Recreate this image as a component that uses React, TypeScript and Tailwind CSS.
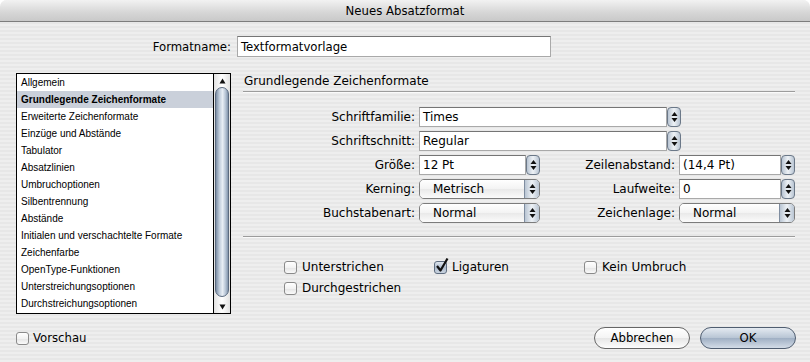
import React from "react";

const items = [
  "Allgemein",
  "Grundlegende Zeichenformate",
  "Erweiterte Zeichenformate",
  "Einzüge und Abstände",
  "Tabulator",
  "Absatzlinien",
  "Umbruchoptionen",
  "Silbentrennung",
  "Abstände",
  "Initialen und verschachtelte Formate",
  "Zeichenfarbe",
  "OpenType-Funktionen",
  "Unterstreichungsoptionen",
  "Durchstreichungsoptionen",
];

function Arrows() {
  return (
    <svg width="7" height="12" viewBox="0 0 7 12">
      <path d="M3.5 1 L6.5 5 L0.5 5 Z" fill="#111" />
      <path d="M3.5 11 L6.5 7 L0.5 7 Z" fill="#111" />
    </svg>
  );
}

function Stepper() {
  return (
    <div className="w-[14px] h-[20px] shrink-0 rounded-[4px] border border-[#6b7888] bg-[linear-gradient(to_right,#b9c5d3,#eef2f6_50%,#b9c5d3)] flex items-center justify-center">
      <Arrows />
    </div>
  );
}

function Combo({ value, width }: { value: string; width: string }) {
  return (
    <div className="flex items-center">
      <div
        className={`${width} h-[20px] bg-white border border-[#a9a9a9] border-t-[#757575] pl-[3px] text-[12px] leading-[18px] text-black`}
      >
        {value}
      </div>
      <Stepper />
    </div>
  );
}

function Popup({ value, width }: { value: string; width: string }) {
  return (
    <div
      className={`${width} h-[20px] flex rounded-[5px] border border-[#7c7c7c] overflow-hidden`}
    >
      <div className="flex-1 bg-[linear-gradient(to_bottom,#ffffff,#f3f3f3_50%,#e9e9e9_51%,#fbfbfb)] pl-[13px] text-[12px] leading-[18px] text-black">
        {value}
      </div>
      <div className="w-[15px] border-l border-[#7f8da0] bg-[linear-gradient(to_right,#b9c5d3,#eef2f6_50%,#b9c5d3)] flex items-center justify-center">
        <Arrows />
      </div>
    </div>
  );
}

function Check({ checked = false }: { checked?: boolean }) {
  return (
    <div className="relative w-[13px] h-[13px] shrink-0">
      <div
        className={
          checked
            ? "w-[13px] h-[13px] rounded-[3px] border border-[#5f6d80] bg-[linear-gradient(to_bottom,#dfe6ee,#aebcce_50%,#c9d3df)]"
            : "w-[13px] h-[13px] rounded-[3px] border border-[#8a8a8a] bg-[linear-gradient(to_bottom,#ffffff,#f2f2f2_50%,#e4e4e4_51%,#fafafa)]"
        }
      />
      {checked && (
        <svg
          className="absolute left-[1px] top-[-4px]"
          width="14"
          height="16"
          viewBox="0 0 14 16"
        >
          <path
            d="M2 9 L5.5 13.5 L12.5 1.5"
            stroke="#111"
            strokeWidth="2.2"
            fill="none"
            strokeLinejoin="round"
          />
        </svg>
      )}
    </div>
  );
}

function Field({ label, children, width }: { label: string; children: React.ReactNode; width: string }) {
  return (
    <>
      <div className={`${width} shrink-0 text-right text-[12px] text-black`}>{label}</div>
      <div className="ml-[4px]">{children}</div>
    </>
  );
}

export default function App() {
  return (
    <div className="w-[810px] h-[362px] bg-white font-['DejaVu_Sans',sans-serif] text-black overflow-hidden">
      <div className="w-[810px] h-[362px] rounded-t-[7px] overflow-hidden bg-[image:repeating-linear-gradient(180deg,#eeeeee_0px,#eeeeee_2px,#e7e7e7_2px,#e7e7e7_4px)]">
        <div className="h-[22px] border-b border-[#7d7d7d] bg-[linear-gradient(to_bottom,#f2f2f2,#d6d6d6_60%,#c9c9c9)] flex items-center justify-center font-['DejaVu_Sans_Condensed',sans-serif] text-[13px]">
          Neues Absatzformat
        </div>

        <div className="mt-[14px] flex items-center">
          <div className="w-[233px] text-right pr-[2px] font-['DejaVu_Sans_Condensed',sans-serif] text-[13px]">
            Formatname:
          </div>
          <div className="ml-[4px] w-[314px] h-[21px] bg-white border border-[#a9a9a9] border-t-[#757575] pl-[3px] font-['DejaVu_Sans_Condensed',sans-serif] text-[13px] leading-[19px]">
            Textformatvorlage
          </div>
        </div>

        <div className="mt-[16px] flex">
          <div className="ml-[16px] w-[215px] h-[241px] border border-black bg-white flex">
            <div className="flex-1 font-['Liberation_Sans',sans-serif] text-[10px]">
              {items.map((it, i) => (
                <div
                  key={it}
                  className={
                    i === 1
                      ? "h-[17px] leading-[17px] pl-[4px] bg-[#cad0da] font-bold"
                      : "h-[17px] leading-[17px] pl-[4px]"
                  }
                >
                  {it}
                </div>
              ))}
            </div>
            <div className="w-[17px] border-l border-black flex flex-col bg-[linear-gradient(to_right,#e2e2e2,#ffffff_50%,#e2e2e2)]">
              <div className="h-[13px] flex items-center justify-center">
                <svg width="7" height="6" viewBox="0 0 7 6">
                  <path d="M3.5 0.5 L6.5 5.5 L0.5 5.5 Z" fill="#111" />
                </svg>
              </div>
              <div className="flex-1 mx-[1px] rounded-[7px] border border-[#5b6b80] bg-[linear-gradient(to_right,#7d8fa6,#c3cfdd_30%,#e8eef5_55%,#b5c3d4_80%,#8294ab)]" />
              <div className="h-[16px] flex items-end justify-center pb-[3px]">
                <svg width="7" height="6" viewBox="0 0 7 6">
                  <path d="M3.5 5.5 L6.5 0.5 L0.5 0.5 Z" fill="#111" />
                </svg>
              </div>
            </div>
          </div>

          <div className="ml-[12px] w-[552px]">
            <div className="h-[19px] border-b border-[#9c9c9c] pl-px text-[12px] leading-[17px]">
              Grundlegende Zeichenformate
            </div>
            <div className="h-px bg-white/70" />

            <div className="mt-[14px] flex flex-col gap-[4px]">
              <div className="flex items-center h-[20px]">
                <Field label="Schriftfamilie:" width="w-[172px]">
                  <Combo value="Times" width="w-[248px]" />
                </Field>
              </div>
              <div className="flex items-center h-[20px]">
                <Field label="Schriftschnitt:" width="w-[172px]">
                  <Combo value="Regular" width="w-[248px]" />
                </Field>
              </div>
              <div className="flex items-center h-[20px]">
                <Field label="Größe:" width="w-[172px]">
                  <Combo value="12 Pt" width="w-[107px]" />
                </Field>
                <Field label="Zeilenabstand:" width="w-[135px]">
                  <Combo value="(14,4 Pt)" width="w-[102px]" />
                </Field>
              </div>
              <div className="flex items-center h-[20px]">
                <Field label="Kerning:" width="w-[172px]">
                  <Popup value="Metrisch" width="w-[121px]" />
                </Field>
                <Field label="Laufweite:" width="w-[135px]">
                  <Combo value="0" width="w-[102px]" />
                </Field>
              </div>
              <div className="flex items-center h-[20px]">
                <Field label="Buchstabenart:" width="w-[172px]">
                  <Popup value="Normal" width="w-[121px]" />
                </Field>
                <Field label="Zeichenlage:" width="w-[135px]">
                  <Popup value="Normal" width="w-[116px]" />
                </Field>
              </div>
            </div>

            <div className="mt-[13px] h-px bg-[#9c9c9c]" />
            <div className="h-px bg-white/70" />

            <div className="mt-[20px] pl-[41px] grid grid-cols-[150px_150px_150px] gap-y-[3px] text-[12px]">
              <div className="flex items-center gap-[5px]">
                <Check />
                <span>Unterstrichen</span>
              </div>
              <div className="flex items-center gap-[5px]">
                <Check checked />
                <span>Ligaturen</span>
              </div>
              <div className="flex items-center gap-[5px]">
                <Check />
                <span>Kein Umbruch</span>
              </div>
              <div className="flex items-center gap-[5px]">
                <Check />
                <span>Durchgestrichen</span>
              </div>
            </div>
          </div>
        </div>

        <div className="mt-[13px] flex items-center justify-between h-[22px] pl-[16px] pr-[14px]">
          <div className="flex items-center gap-[4px] font-['DejaVu_Sans_Condensed',sans-serif] text-[13px]">
            <Check />
            <span>Vorschau</span>
          </div>
          <div className="flex gap-[10px] font-['DejaVu_Sans_Condensed',sans-serif] text-[13px]">
            <div className="w-[96px] h-[22px] rounded-full border border-[#666] bg-[linear-gradient(to_bottom,#ffffff,#f4f4f4_50%,#e6e6e6_51%,#fdfdfd)] flex items-center justify-center">
              Abbrechen
            </div>
            <div className="w-[96px] h-[22px] rounded-full border border-[#4f5d70] bg-[linear-gradient(to_bottom,#e4eaf1,#b9c6d5_48%,#a0b0c4_52%,#d3dce7)] flex items-center justify-center">
              OK
            </div>
          </div>
        </div>
      </div>
    </div>
  );
}
